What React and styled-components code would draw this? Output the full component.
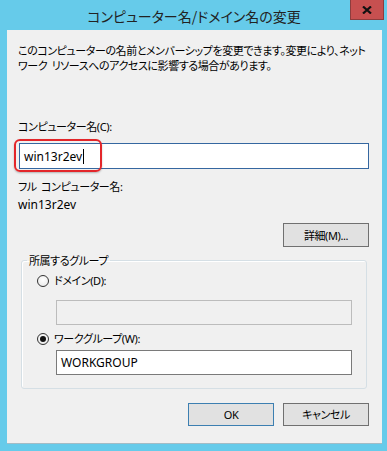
import React from "react";
import styled, { createGlobalStyle } from "styled-components";

const GlobalStyle = createGlobalStyle`
    html, body {
        margin: 0;
        background: #66cbea;
        overflow: hidden;
    }
    body {
        font-family: "Noto Sans", "Noto Sans CJK JP", sans-serif;
        font-feature-settings: "palt";
        color: #000;
    }
`;

const Frame = styled.div`
    width: 387px;
    height: 451px;
    box-sizing: border-box;
    background: #66cbea;
    padding: 0 5px 8px 7px;
    display: flex;
    flex-direction: column;
`;

const TitleBar = styled.div`
    height: 30px;
    flex-shrink: 0;
    display: grid;
    grid-template-columns: 1fr auto 1fr;
`;

const Title = styled.div`
    grid-column: 2;
    align-self: center;
    font-family: "Noto Sans CJK JP", sans-serif;
    font-size: 14px;
    line-height: 18px;
    color: #222;
    white-space: nowrap;
    margin: 1px 0 0 -1px;
`;

const CloseButton = styled.div`
    grid-column: 3;
    justify-self: end;
    width: 34px;
    height: 20px;
    margin-right: -2px;
    box-sizing: border-box;
    background: #c75050;
    border: 1px solid #8d3d3d;
    border-top: none;
    display: flex;
    align-items: center;
    justify-content: center;
`;

const Client = styled.div`
    flex: 1;
    background: #f0f0f0;
    box-shadow: 0 1px 0 #a3bcc6;
    padding: 13px 13px 0 11px;
    display: flex;
    flex-direction: column;
    font-size: 11px;
    line-height: 15px;
    letter-spacing: -0.4px;
`;

const Description = styled.p`
    margin: 0;
    white-space: nowrap;
    letter-spacing: -0.42px;
    word-spacing: 2px;
`;

const Label = styled.div`
    margin-top: ${({ $gap }) => $gap}px;
    white-space: nowrap;
    word-spacing: 2px;
`;

const Value = styled.span`
    font-size: 12px;
    letter-spacing: 0;
`;

const FieldWrap = styled.div`
    position: relative;
    margin: ${({ $gap }) => $gap}px ${({ $side }) => $side || 0}px 0 ${({ $indent }) => $indent || 0}px;
`;

const TextBox = styled.div`
    height: ${({ $height }) => $height}px;
    box-sizing: border-box;
    border: 1px solid ${({ $tone }) => ($tone === "focus" ? "#3567a0" : $tone === "off" ? "#bcbcbc" : "#7a7a7a")};
    background: ${({ $tone }) => ($tone === "off" ? "#f0f0f0" : "#fff")};
    padding: 0 4px;
    display: flex;
    align-items: center;
    font-size: 12px;
    letter-spacing: 0;
    white-space: nowrap;
`;

const Caret = styled.span`
    display: inline-block;
    width: 1px;
    height: 15px;
    background: #000;
    margin-left: 1px;
`;

const Highlight = styled.div`
    position: absolute;
    left: -5px;
    top: -4px;
    width: 88px;
    height: 33px;
    box-sizing: border-box;
    border: 2px solid #e3262a;
    border-radius: 6px;
    box-shadow: 0 1px 2px rgba(0, 0, 0, 0.25);
    pointer-events: none;
`;

const ButtonRow = styled.div`
    display: flex;
    justify-content: flex-end;
    gap: 9px;
    margin-top: ${({ $gap }) => $gap}px;
`;

const Button = styled.div`
    width: 86px;
    height: ${({ $height }) => $height || 24}px;
    box-sizing: border-box;
    background: #e1e1e1;
    border: 1px solid ${({ $primary }) => ($primary ? "#3c7fb1" : "#707070")};
    display: flex;
    align-items: center;
    justify-content: center;
    white-space: nowrap;
`;

const Group = styled.fieldset`
    margin: 6px 2px 0 3px;
    padding: 0 0 13px;
    border: 1px solid #d5dfe5;
    border-radius: 3px;
    box-shadow: inset 1px 1px 0 #fff;
    min-width: 0;
`;

const Legend = styled.legend`
    margin-left: 5px;
    padding: 0 2px;
    line-height: 15px;
`;

const RadioRow = styled.div`
    display: flex;
    align-items: center;
    gap: 5px;
    margin: ${({ $gap }) => $gap}px 0 0 15px;
    height: 15px;
`;

const RadioCircle = styled.span`
    width: 12px;
    height: 12px;
    box-sizing: border-box;
    border-radius: 50%;
    border: 1px solid #333;
    background: radial-gradient(circle at 50% 40%, #fff, #e6e6e6);
    display: flex;
    align-items: center;
    justify-content: center;

    &::after {
        content: "";
        width: 6px;
        height: 6px;
        border-radius: 50%;
        background: #111;
        display: ${({ $checked }) => ($checked ? "block" : "none")};
    }
`;

const Radio = ({ checked, gap, children }) => (
    <RadioRow $gap={gap}>
        <RadioCircle $checked={checked} />
        <span>{children}</span>
    </RadioRow>
);

export default function App() {
    return (
        <Frame>
            <GlobalStyle />
            <TitleBar>
                <Title>コンピューター名/ドメイン名の変更</Title>
                <CloseButton>
                    <svg width="10" height="8" viewBox="0 0 10 8">
                        <path d="M1 0.5 L9 7.5 M9 0.5 L1 7.5" stroke="#111" strokeWidth="2.2" />
                    </svg>
                </CloseButton>
            </TitleBar>
            <Client>
                <Description>
                    このコンピューターの名前とメンバーシップを変更できます。変更により、ネット
                    <br />
                    ワーク リソースへのアクセスに影響する場合があります。
                </Description>

                <Label $gap={46}>コンピューター名(C):</Label>
                <FieldWrap $gap={9} $indent={1}>
                    <TextBox $height={26} $tone="focus">
                        win13r2ev
                        <Caret />
                    </TextBox>
                    <Highlight />
                </FieldWrap>

                <Label $gap={10}>フル コンピューター名:</Label>
                <Label $gap={3}><Value>win13r2ev</Value></Label>

                <ButtonRow $gap={11}>
                    <Button>詳細(M)...</Button>
                </ButtonRow>

                <Group>
                    <Legend>所属するグループ</Legend>
                    <Radio gap={5}>ドメイン(D):</Radio>
                    <FieldWrap $gap={12} $indent={34} $side={14}>
                        <TextBox $height={25} $tone="off" />
                    </FieldWrap>
                    <Radio gap={6} checked>ワークグループ(W):</Radio>
                    <FieldWrap $gap={4} $indent={34} $side={14}>
                        <TextBox $height={25}>WORKGROUP</TextBox>
                    </FieldWrap>
                </Group>

                <ButtonRow $gap={14}>
                    <Button $primary $height={23}>OK</Button>
                    <Button $height={23}>キャンセル</Button>
                </ButtonRow>
            </Client>
        </Frame>
    );
}
